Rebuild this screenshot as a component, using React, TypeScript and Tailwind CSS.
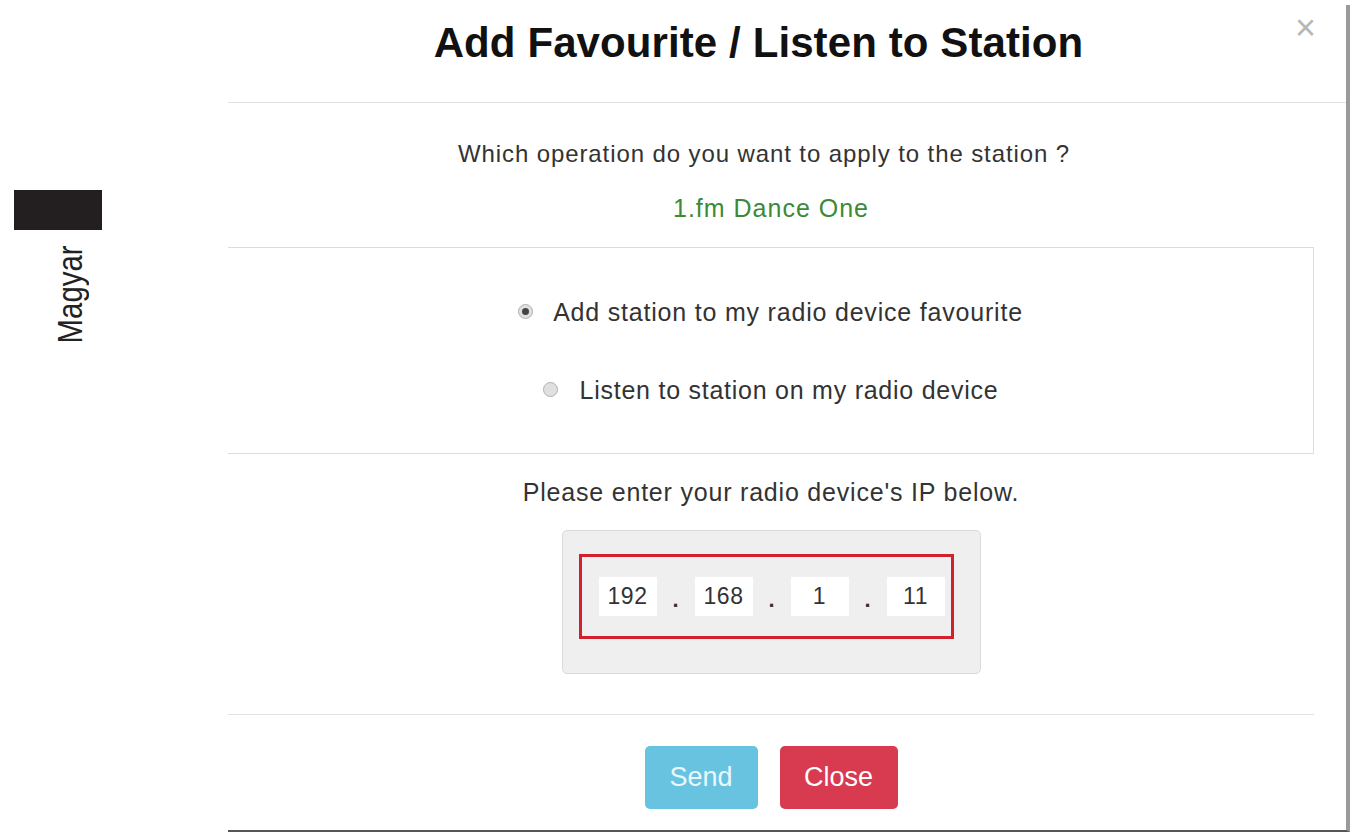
import React from 'react';

function Radio({ checked }: { checked?: boolean }) {
  return (
    <span className="w-[15px] h-[15px] rounded-full border border-[#b0b0b0] bg-[#e0e0e0] flex items-center justify-center shrink-0">
      {checked && <span className="w-[7px] h-[7px] rounded-full bg-[#444]" />}
    </span>
  );
}

function Octet({ value }: { value: string }) {
  return (
    <div className="w-[58px] h-[39px] bg-white flex items-center justify-center text-[23px] tracking-[0.5px] text-[#333]">
      {value}
    </div>
  );
}

function Dot() {
  return <div className="w-[38px] text-center text-[22px] font-bold text-[#333] pt-[6px]">.</div>;
}

export default function App() {
  return (
    <div className="w-[1356px] h-[834px] bg-white flex overflow-hidden font-[Liberation_Sans,Arial,sans-serif] text-[#333]">
      {/* Language tab */}
      <aside className="w-[228px] shrink-0 pt-[190px] pl-[14px] flex flex-col">
        <div className="w-[88px] h-[40px] bg-[#231f20]" />
        <div className="ml-[39px] mt-[6px] [writing-mode:vertical-rl] rotate-180 scale-y-[0.84] text-[35px] leading-[34px] text-[#222]">
          Magyar
        </div>
      </aside>

      {/* Dialog */}
      <main className="w-[1122px] mt-[5px] h-[827px] border-r-4 border-b-2 border-r-[#9a9a9a] border-b-[#555] flex flex-col">
        <header className="h-[98px] border-b border-[#e3e3e3] flex items-start shrink-0">
          <h1 className="flex-1 text-center text-[42px] font-bold text-[#111] pt-[13px] leading-[50px] tracking-[0.1px] pr-[6px]">
            Add Favourite / Listen to Station
          </h1>
          <span className="w-[20px] mr-[31px] mt-[5px] text-center text-[#b8b8b8] text-[36px] leading-[36px]">×</span>
        </header>

        <div className="pr-[32px] flex flex-col items-center">
          <p className="mt-[36px] mr-[14px] text-[24px] leading-[30px] tracking-[0.9px]">Which operation do you want to apply to the station ?</p>
          <p className="mt-[24px] text-[25px] leading-[30px] tracking-[1px] text-[#3c8a35]">1.fm Dance One</p>

          <div className="mt-[24px] w-full h-[207px] border border-l-0 border-[#dcdcdc] flex flex-col items-center justify-center gap-[48px]">
            <label className="flex items-center gap-[20px] text-[25px] leading-[30px] tracking-[0.8px]">
              <Radio checked />
              Add station to my radio device favourite
            </label>
            <label className="flex items-center gap-[22px] text-[25px] leading-[30px] tracking-[0.75px]">
              <Radio />
              Listen to station on my radio device
            </label>
          </div>

          <p className="mt-[23px] text-[25px] leading-[30px] tracking-[0.8px]">Please enter your radio device's IP below.</p>

          <div className="mt-[23px] w-[419px] h-[144px] bg-[#efefef] border border-[#dadada] rounded-[5px] pl-[16px] pt-[23px]">
            <div className="w-[375px] h-[85px] border-[3px] border-[#d3202f] flex items-center pl-[17px]">
              <Octet value="192" />
              <Dot />
              <Octet value="168" />
              <Dot />
              <Octet value="1" />
              <Dot />
              <Octet value="11" />
            </div>
          </div>

          <div className="mt-[40px] w-full border-t border-[#e3e3e3]" />

          <div className="mt-[31px] flex gap-[22px]">
            <button className="w-[113px] h-[63px] rounded-[5px] bg-[#68c3e1] text-[#eaf7fc] text-[27px]">Send</button>
            <button className="w-[118px] h-[63px] rounded-[5px] bg-[#d83a4f] text-white text-[27px]">Close</button>
          </div>
        </div>
      </main>
    </div>
  );
}
